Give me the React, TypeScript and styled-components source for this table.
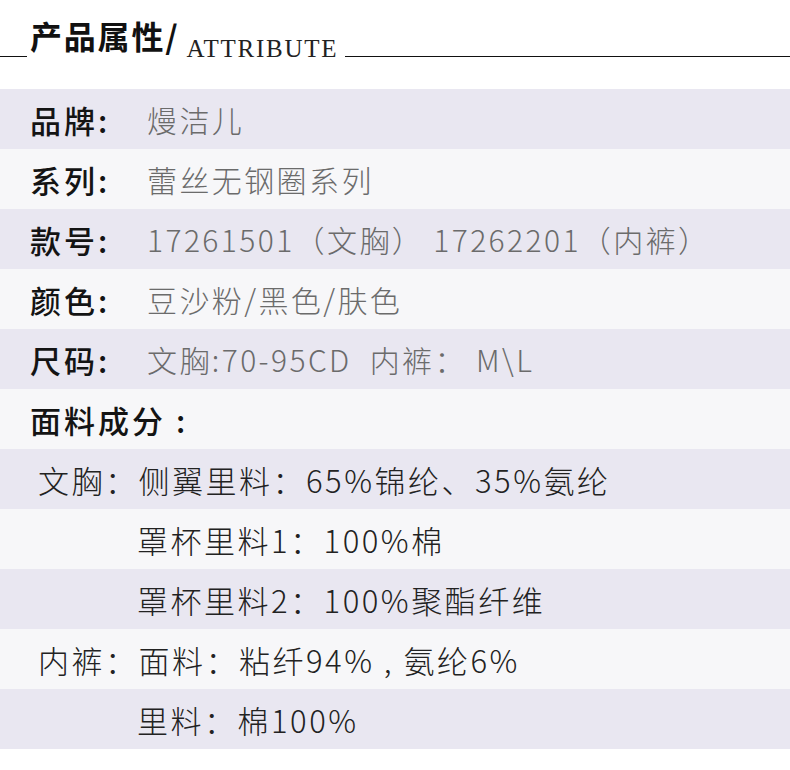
import React from "react";
import styled, { createGlobalStyle } from "styled-components";

const Global = createGlobalStyle`
  html, body { margin: 0; padding: 0; background: #ffffff; }
  body { font-family: "Noto Sans CJK SC", "Noto Sans", sans-serif; }
`;

const Page = styled.div`
  width: 790px;
  background: #ffffff;
`;

const Header = styled.div`
  height: 89px;
  display: flex;
  align-items: flex-end;
  box-sizing: border-box;
`;

const HeaderInner = styled.div`
  display: flex;
  align-items: flex-end;
  width: 100%;
  margin-bottom: 32px;
`;

const Rule = styled.div<{ $w?: number }>`
  height: 1.5px;
  background: #111;
  flex: ${(p) => (p.$w ? `0 0 ${p.$w}px` : "1 1 auto")};
`;

const TitleCn = styled.span`
  font-family: "Noto Sans CJK SC", sans-serif;
  font-weight: 700;
  font-size: 32px;
  line-height: 1;
  color: #111;
  margin-left: 3px;
  margin-bottom: 6px;
  letter-spacing: 1.8px;
`;

const TitleEn = styled.span`
  font-family: "Liberation Serif", "Times New Roman", serif;
  font-size: 25px;
  line-height: 1;
  color: #222;
  letter-spacing: 1.75px;
  margin-left: 7px;
  margin-right: 7px;
  margin-bottom: -4px;
`;

const Row = styled.div<{ $shade: boolean; $indent?: number }>`
  height: 60px;
  display: flex;
  align-items: center;
  background: ${(p) => (p.$shade ? "#e9e7f1" : "#f7f7f9")};
  padding-left: ${(p) => p.$indent ?? 30}px;
  box-sizing: border-box;
  white-space: pre;
`;

const Label = styled.span`
  flex: 0 0 auto;
  min-width: 117px;
  font-size: 31px;
  font-weight: 500;
  color: #141414;
  letter-spacing: 3px;
  line-height: 1;
`;

const Value = styled.span`
  font-size: 30px;
  font-weight: 300;
  color: #6b6b6b;
  letter-spacing: 2.4px;
  line-height: 1;
`;

const Prefix = styled.span`
  flex: 0 0 99px;
  font-size: 31px;
  font-weight: 300;
  color: #222;
  letter-spacing: 2.5px;
  line-height: 1;
`;

const CompText = styled.span`
  font-size: 31px;
  font-weight: 300;
  color: #222;
  letter-spacing: 2.5px;
  line-height: 1;
`;

const attrs = [
  { label: "品牌:", value: "熳洁儿" },
  { label: "系列:", value: "蕾丝无钢圈系列" },
  { label: "款号:", value: "17261501（文胸） 17262201（内裤）" },
  { label: "颜色:", value: "豆沙粉/黑色/肤色" },
  { label: "尺码:", value: "文胸:70-95CD  内裤： M\\L" },
];

const comps = [
  { prefix: "文胸：", text: "侧翼里料：65%锦纶、35%氨纶" },
  { prefix: "", text: "罩杯里料1：100%棉" },
  { prefix: "", text: "罩杯里料2：100%聚酯纤维" },
  { prefix: "内裤：", text: "面料：粘纤94% , 氨纶6%" },
  { prefix: "", text: "里料：棉100%" },
];

export default function App() {
  return (
    <Page>
      <Global />
      <Header>
        <HeaderInner>
          <Rule $w={27} />
          <TitleCn>产品属性/</TitleCn>
          <TitleEn>ATTRIBUTE</TitleEn>
          <Rule />
        </HeaderInner>
      </Header>
      {attrs.map((a, i) => (
        <Row key={a.label} $shade={i % 2 === 0}>
          <Label>{a.label}</Label>
          <Value>{a.value}</Value>
        </Row>
      ))}
      <Row $shade={false}>
        <Label>面料成分 :</Label>
      </Row>
      {comps.map((c, i) => (
        <Row key={c.text} $shade={i % 2 === 0} $indent={38}>
          <Prefix>{c.prefix}</Prefix>
          <CompText>{c.text}</CompText>
        </Row>
      ))}
    </Page>
  );
}
